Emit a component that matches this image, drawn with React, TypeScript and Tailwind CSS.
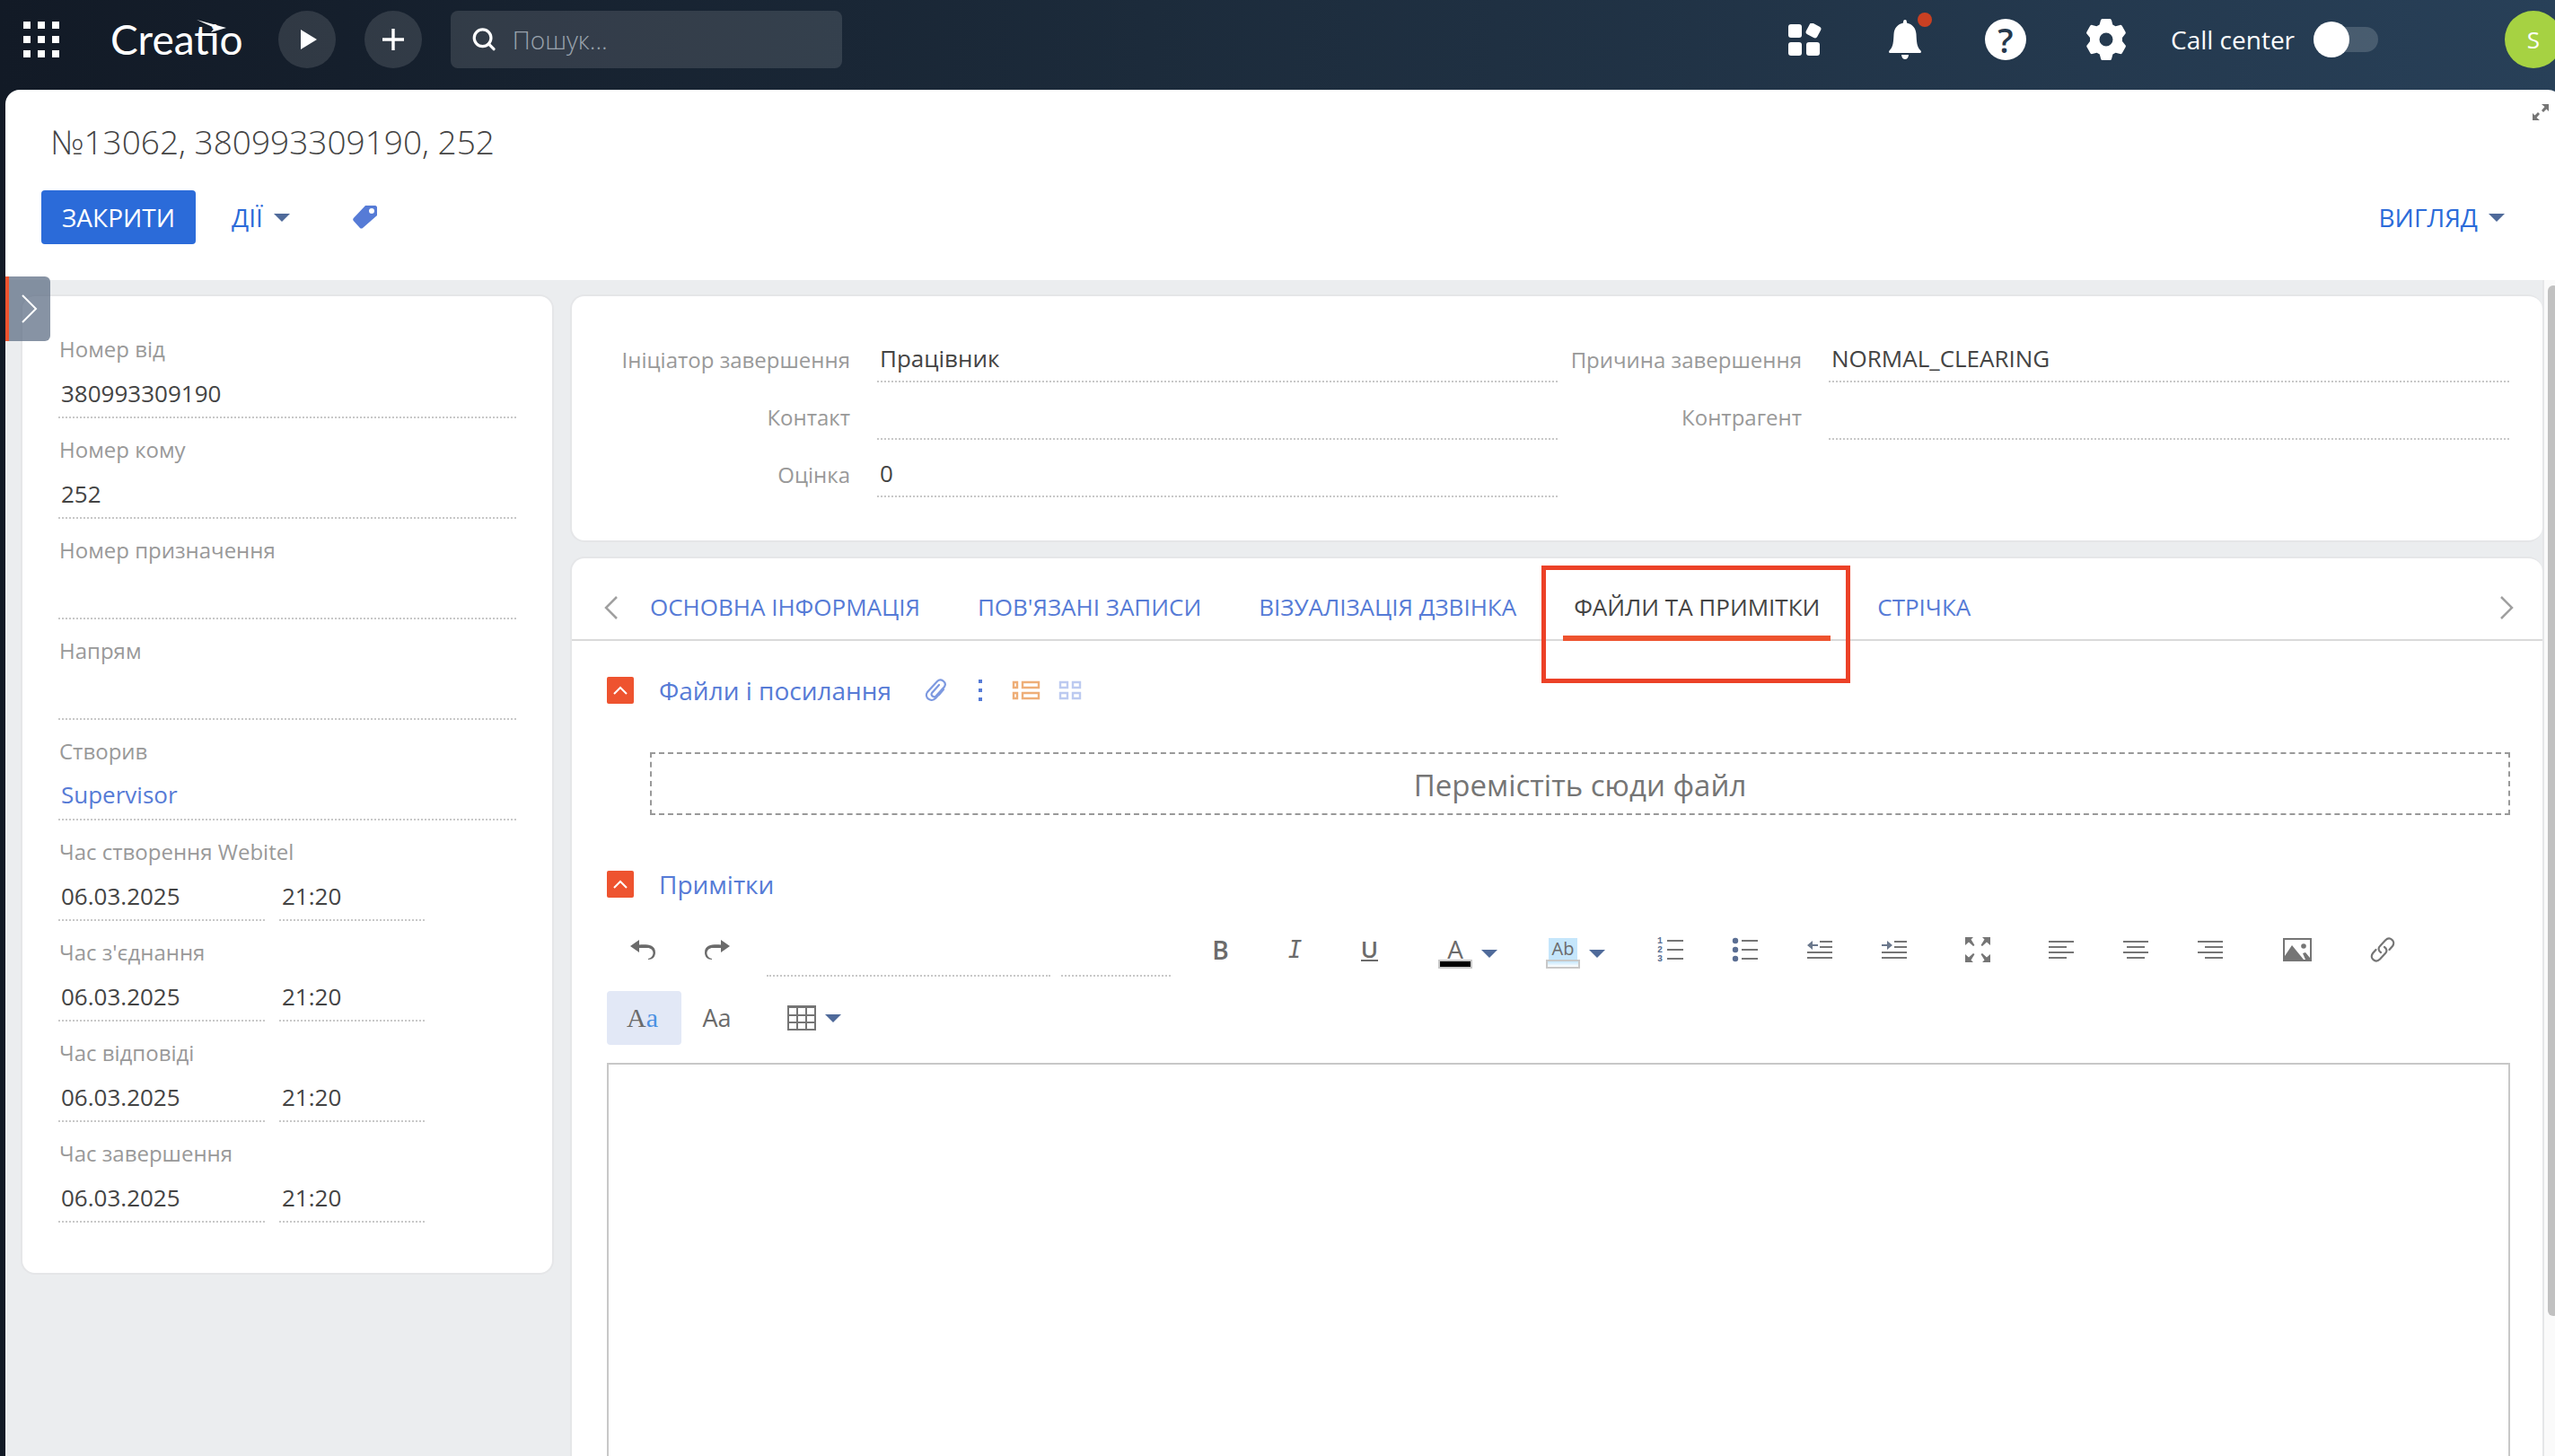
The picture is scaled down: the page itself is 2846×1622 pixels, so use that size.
import { useState } from 'react';
import type { ReactNode } from 'react';
import clsx from 'clsx';

const numberFields = [
  { id: 'caller', label: 'Номер від', value: '380993309190' },
  { id: 'callee', label: 'Номер кому', value: '252' },
  { id: 'destination', label: 'Номер призначення', value: '' },
  { id: 'direction', label: 'Напрям', value: '' },
];

const timeFields = [
  { id: 'created', label: 'Час створення Webitel', date: '06.03.2025', time: '21:20' },
  { id: 'connected', label: "Час з'єднання", date: '06.03.2025', time: '21:20' },
  { id: 'answered', label: 'Час відповіді', date: '06.03.2025', time: '21:20' },
  { id: 'finished', label: 'Час завершення', date: '06.03.2025', time: '21:20' },
];

const tabs = ['ОСНОВНА ІНФОРМАЦІЯ', "ПОВ'ЯЗАНІ ЗАПИСИ", 'ВІЗУАЛІЗАЦІЯ ДЗВІНКА', 'ФАЙЛИ ТА ПРИМІТКИ', 'СТРІЧКА'];
const highlightedTab = 'ФАЙЛИ ТА ПРИМІТКИ';

const inputClass =
  'block border-b-2 border-dotted border-[#c8c8c8] bg-transparent pl-[3px] text-[26px] text-[#444] focus:outline-none';

function Caret() {
  return (
    <svg width="18" height="9" viewBox="0 0 18 9" fill="#4f6a9a">
      <path d="M0 0h18L9 9z" />
    </svg>
  );
}

function SideField({ id, label, children }: { id: string; label: string; children: ReactNode }) {
  return (
    <div className="flex h-28 flex-col justify-end">
      <label htmlFor={id} className="pl-px text-[24px] leading-9 text-[#999]">
        {label}
      </label>
      {children}
    </div>
  );
}

function RowField({ id, label, value }: { id: string; label: string; value: string }) {
  return (
    <div className="flex h-16 items-end">
      <label htmlFor={id} className="w-[302px] shrink-0 pr-[30px] text-right text-[24px] leading-[50px] text-[#999]">
        {label}
      </label>
      <input id={id} defaultValue={value} className={clsx(inputClass, 'h-[52px] min-w-0 flex-1')} />
    </div>
  );
}

function Tool({ label, active, children }: { label: string; active?: boolean; children: ReactNode }) {
  return (
    <button
      type="button"
      aria-label={label}
      className={clsx('flex h-[60px] w-[83px] items-center justify-center rounded pr-1 text-[#6b6b6b]', active && 'bg-[#e2e8f6]')}
    >
      {children}
    </button>
  );
}

function SectionHeader({ title, open, onToggle, children }: { title: string; open: boolean; onToggle: () => void; children?: ReactNode }) {
  return (
    <div className="flex h-10 items-center">
      <button type="button" aria-label={title} onClick={onToggle} className="flex size-[30px] items-center justify-center rounded-xs bg-[#ee532f]">
        <svg width="16" height="10" viewBox="0 0 16 10" fill="none" stroke="#fff" strokeWidth="2" className={open ? '' : 'rotate-180'}>
          <path d="M1 9l7-7 7 7" />
        </svg>
      </button>
      <h2 className="ml-7 text-[28px] leading-10 text-[#567bd6]">{title}</h2>
      {children}
    </div>
  );
}

function TopBar() {
  return (
    <header className="flex h-[100px] shrink-0 items-center pt-3 pb-6 pl-[26px]">
      <button type="button" aria-label="Apps">
        <svg width="40" height="40" viewBox="0 0 40 40" fill="#fff">
          <path d="M0 0h8v8H0zM16 0h8v8h-8zM32 0h8v8h-8zM0 16h8v8H0zM16 16h8v8h-8zM32 16h8v8h-8zM0 32h8v8H0zM16 32h8v8h-8zM32 32h8v8h-8z" />
        </svg>
      </button>
      <a href="#" className="relative ml-[57px] w-[150px] font-[Lato] text-[46px] leading-[68px] text-white">
        Creatio
        <svg width="34" height="15" viewBox="0 0 34 15" fill="#fff" className="absolute top-3 left-24">
          <path d="M0 0l33 9-17 5 4-5z" />
        </svg>
      </a>
      <button type="button" aria-label="Run" className="ml-[37px] flex size-16 items-center justify-center rounded-full bg-white/12">
        <svg width="18" height="22" viewBox="0 0 18 22" fill="#fff" className="ml-1">
          <path d="M0 0l18 11L0 22z" />
        </svg>
      </button>
      <button type="button" aria-label="Add" className="ml-8 flex size-16 items-center justify-center rounded-full bg-white/12">
        <svg width="24" height="24" viewBox="0 0 24 24" stroke="#fff" strokeWidth="3.4">
          <path d="M12 0v24M0 12h24" />
        </svg>
      </button>
      <label className="ml-8 flex h-16 w-[436px] items-center gap-[18px] rounded-lg bg-white/12 pl-6">
        <svg width="30" height="30" viewBox="0 0 30 30" fill="none" stroke="#fff" strokeWidth="3.6">
          <circle cx="13" cy="13" r="10.5" />
          <path d="M20.500 20.500L27 27" strokeLinecap="round" />
        </svg>
        <input
          aria-label="Пошук"
          placeholder="Пошук..."
          className="w-full bg-transparent text-[28px] font-light text-white placeholder:text-[#9aa3ad] focus:outline-none"
        />
      </label>

      <div className="ml-auto flex items-center">
        <div className="flex items-center gap-16">
          <button type="button" aria-label="Dashboards" className="flex size-12 items-center justify-center">
            <svg width="38" height="36" viewBox="0 0 38 36" fill="#fff">
              <rect x="1" y="1" width="15" height="15" rx="3" />
              <rect x="22" y="1" width="14" height="14" rx="3" transform="rotate(28 29 8)" />
              <rect x="1" y="21" width="15" height="15" rx="3" />
              <rect x="21" y="21" width="15" height="15" rx="3" />
            </svg>
          </button>
          <button type="button" aria-label="Notifications" className="relative flex size-12 items-center justify-center">
            <svg width="38" height="46" viewBox="0 0 38 46" fill="#fff">
              <path d="M19 1c1.500 0 2 1 2 3.500C27 6 31 10 31.500 17c.5 9 .5 14 5 18.500.8 1 .5 2.500-.8 2.500H2.300C1 38 .7 36.500 1.500 35.500 6 31 6 26 6.500 17 7 10 11 6 17 4.500 17 2 17.500 1 19 1z" />
              <path d="M15 40h8c0 3-2 5-4 5s-4-2-4-5z" />
            </svg>
            <span className="absolute -top-1.5 -right-1.5 size-4 rounded-full bg-[#c94022]" />
          </button>
          <button type="button" aria-label="Help" className="flex size-12 items-center justify-center">
            <span className="flex size-[46px] items-center justify-center rounded-full bg-white text-[38px] leading-none font-semibold text-[#26384c]">?</span>
          </button>
          <button type="button" aria-label="Settings" className="flex size-12 items-center justify-center">
            <svg width="48" height="48" viewBox="0 0 48 48" fill="#fff">
              <path
                fillRule="evenodd"
                d="M20 1h8c1 0 1.700.6 2 1.600l1.300 4.800 3.200 1.800 4.800-1.300c1-.3 1.900 0 2.400.9l3.800 6.600c.5.9.4 1.900-.4 2.600L42 22v4l3.200 4c.8.7.9 1.700.4 2.600l-3.800 6.600c-.5.9-1.400 1.200-2.400.9l-4.800-1.300-3.200 1.800-1.300 4.800c-.3 1-1 1.600-2 1.600h-8c-1 0-1.700-.6-2-1.600l-1.300-4.800-3.200-1.800-4.800 1.300c-1 .3-1.900 0-2.400-.9l-3.800-6.600c-.5-.9-.4-1.900.4-2.600L6 26v-4l-3.200-4c-.8-.7-.9-1.700-.4-2.600l3.800-6.600c.5-.9 1.400-1.200 2.400-.9l4.800 1.300 3.200-1.800L18 2.600c.3-1 1-1.600 2-1.600zM24 16.500a7.500 7.500 0 100 15 7.500 7.500 0 000-15z"
              />
            </svg>
          </button>
        </div>
        <label htmlFor="call-center" className="ml-12 w-[159px] text-[28px] leading-9 text-white">
          Call center
        </label>
        <span className="relative flex h-10 w-[72px] items-center">
          <input id="call-center" type="checkbox" className="peer h-7 w-full appearance-none rounded-full bg-white/16" />
          <span className="pointer-events-none absolute left-0 size-10 rounded-full bg-white" />
        </span>
        <button type="button" className="ml-[141px] size-16 rounded-full bg-[#a6d242] text-[26px] text-white">
          S
        </button>
      </div>
    </header>
  );
}

function SidePanel() {
  return (
    <aside className="w-[594px] shrink-0 self-start rounded-2xl border-2 border-[#e5e6e8] bg-white px-10 pt-6 pb-14">
      {numberFields.map((f) => (
        <SideField key={f.id} id={f.id} label={f.label}>
          <input id={f.id} defaultValue={f.value} className={clsx(inputClass, 'mt-1 h-[55px] w-full')} />
        </SideField>
      ))}
      <SideField id="author" label="Створив">
        <div className="mt-1 flex h-[55px] items-center border-b-2 border-dotted border-[#c8c8c8] pl-[3px]">
          <a id="author" href="#" className="text-[26px] text-[#567bd6]">
            Supervisor
          </a>
        </div>
      </SideField>
      {timeFields.map((f) => (
        <SideField key={f.id} id={f.id} label={f.label}>
          <div className="mt-1 flex gap-4">
            <input id={f.id} defaultValue={f.date} className={clsx(inputClass, 'h-[55px] w-[230px]')} />
            <input aria-label={f.label} defaultValue={f.time} className={clsx(inputClass, 'h-[55px] w-[162px]')} />
          </div>
        </SideField>
      ))}
    </aside>
  );
}

function EditorToolbar() {
  return (
    <div className="mt-[23px]">
      <div className="flex gap-3">
        <div className="flex">
          <Tool label="Undo">
            <svg width="28" height="22" viewBox="0 0 28 22" fill="currentColor">
              <path d="M0 7l10-7v5.500C18 5 28 5 28 14c0 5-3 8-8 8v-1c8-2 7-12-1-12h-9v5z" />
            </svg>
          </Tool>
          <Tool label="Redo">
            <svg width="28" height="22" viewBox="0 0 28 22" fill="currentColor">
              <path d="M28 7L18 0v5.500C10 5 0 5 0 14c0 5 3 8 8 8v-1C0 19 1 9 9 9h9v5z" />
            </svg>
          </Tool>
        </div>
        <input aria-label="Font" className="h-[60px] w-[316px] border-b-2 border-dotted border-[#c8c8c8]" />
        <input aria-label="Font size" className="h-[60px] w-[122px] border-b-2 border-dotted border-[#c8c8c8]" />
        <div className="flex pl-1 text-[28px]">
          <Tool label="Bold">
            <span className="font-semibold">B</span>
          </Tool>
          <Tool label="Italic">
            <span className="font-['DejaVu_Sans_Mono'] text-[26px] italic">I</span>
          </Tool>
          <Tool label="Underline">
            <span className="border-b-2 border-[#6b6b6b] text-[26px] leading-[24px] font-semibold">U</span>
          </Tool>
        </div>
        <button type="button" aria-label="Text color" className="flex h-[60px] w-[108px] items-center justify-center gap-2.5 pt-2">
          <span className="flex flex-col items-center">
            <span className="text-[28px] leading-6 text-[#6b6b6b]">A</span>
            <span className="h-2.5 w-[38px] border-2 border-[#c8c8c8] bg-black" />
          </span>
          <Caret />
        </button>
        <button type="button" aria-label="Highlight color" className="flex h-[60px] w-[108px] items-center justify-center gap-2.5 pt-2">
          <span className="flex flex-col items-center">
            <span className="w-8 bg-[#c5e6fb] text-center text-[20px] leading-6 text-[#6b6b6b]">Ab</span>
            <span className="h-2.5 w-[38px] border-2 border-[#c8c8c8] bg-linear-to-b from-[#c5e6fb] to-white" />
          </span>
          <Caret />
        </button>
        <div className="flex gap-2.5">
          <div className="flex">
            <Tool label="Numbered list">
              <svg width="30" height="32" viewBox="0 0 30 32" fill="#5b6f93" className="font-['Liberation_Mono'] text-[10px] font-bold">
                <text x="0" y="9">1</text>
                <text x="0" y="19">2</text>
                <text x="0" y="29">3</text>
                <path d="M11 5h18v2H11zM11 15h18v2H11zM11 25h18v2H11z" fill="#757575" />
              </svg>
            </Tool>
            <Tool label="Bulleted list">
              <svg width="30" height="28" viewBox="0 0 30 28" fill="#757575">
                <g fill="#5b6f93">
                  <circle cx="4" cy="4" r="3.200" />
                  <circle cx="4" cy="14" r="3.200" />
                  <circle cx="4" cy="24" r="3.200" />
                </g>
                <path d="M11 3h18v2H11zM11 13h18v2H11zM11 23h18v2H11z" />
              </svg>
            </Tool>
            <Tool label="Decrease indent">
              <svg width="28" height="20" viewBox="0 0 28 20" fill="#757575">
                <path d="M14 0h14v2H14zM14 6h14v2H14zM0 12h28v2H0zM0 18h28v2H0z" />
                <path d="M0 5l6-5v4h6v2H6v4z" fill="#6b788c" />
              </svg>
            </Tool>
            <Tool label="Increase indent">
              <svg width="28" height="20" viewBox="0 0 28 20" fill="#757575">
                <path d="M14 0h14v2H14zM14 6h14v2H14zM0 12h28v2H0zM0 18h28v2H0z" />
                <path d="M12 5L6 0v4H0v2h6v4z" fill="#6b788c" />
              </svg>
            </Tool>
          </div>
          <Tool label="Full screen">
            <svg width="28" height="28" viewBox="0 0 28 28" fill="#757575">
              <path d="M0 0h9L6.500 2.500l4 6.500-1.500 1-5-4.500L0 9zM28 0h-9l2.500 2.500-4 6.500 1.500 1 5-4.500L28 9zM0 28h9l-2.500-2.500 4-6.500L9 18l-5 4.500L0 19zM28 28h-9l2.500-2.500-4-6.500 1.500-1 5 4.500 4-3.500z" />
            </svg>
          </Tool>
          <div className="flex">
            <Tool label="Align left">
              <svg width="28" height="20" viewBox="0 0 28 20" fill="#757575">
                <path d="M0 0h28v2H0zM0 6h20v2H0zM0 12h28v2H0zM0 18h20v2H0z" />
              </svg>
            </Tool>
            <Tool label="Align center">
              <svg width="28" height="20" viewBox="0 0 28 20" fill="#757575">
                <path d="M0 0h28v2H0zM4 6h20v2H4zM0 12h28v2H0zM4 18h20v2H4z" />
              </svg>
            </Tool>
            <Tool label="Align right">
              <svg width="28" height="20" viewBox="0 0 28 20" fill="#757575">
                <path d="M0 0h28v2H0zM8 6h20v2H8zM0 12h28v2H0zM8 18h20v2H8z" />
              </svg>
            </Tool>
          </div>
          <div className="flex gap-3 pl-1">
            <Tool label="Image">
              <svg width="32" height="26" viewBox="0 0 32 26" fill="#757575">
                <path fillRule="evenodd" d="M0 0h32v26H0zM2 2v18L10 8l13 16h2l-3-7 3-1 5 6V2z" />
                <circle cx="23" cy="9" r="2.800" />
              </svg>
            </Tool>
            <Tool label="Link">
              <svg width="28" height="28" viewBox="0 0 28 28" fill="none" stroke="#757575" strokeWidth="2.200" strokeLinecap="round">
                <path d="M12 17c-3-2-3-5-1-7l6-6.500c5-5 12 1 8 6.500l-3.500 4" />
                <path d="M16 11c3 2 3 5 1 7l-6 6.500c-5 5-12-1-8-6.500L6.500 14" />
              </svg>
            </Tool>
          </div>
        </div>
      </div>
      <div className="mt-4 flex">
        <Tool label="Formatted text" active>
          <span className="font-['Liberation_Serif',serif] text-[30px] leading-8">
            A<span className="text-[#4a90e2]">a</span>
          </span>
        </Tool>
        <Tool label="Plain text">
          <span className="text-[27px] leading-8">Aa</span>
        </Tool>
        <button type="button" aria-label="Table" className="ml-2.5 flex h-[60px] w-[110px] items-center justify-center gap-2.5">
          <svg width="32" height="28" viewBox="0 0 32 28" fill="none" stroke="#757575" strokeWidth="2">
            <path d="M1 2h30v25H1zM11 2v25M21 2v25M1 11h30M1 19h30" />
            <path d="M0 1.500h32" strokeWidth="3" />
          </svg>
          <Caret />
        </button>
      </div>
    </div>
  );
}

export default function App() {
  const [activeTab, setActiveTab] = useState(highlightedTab);
  const [filesOpen, setFilesOpen] = useState(true);
  const [notesOpen, setNotesOpen] = useState(true);

  return (
    <div className="h-screen overflow-hidden bg-linear-to-r from-[#121a26] via-[#1c2b3b] via-45% to-[#284058] font-['Open_Sans','Noto_Sans',sans-serif]">
      <div className="-mr-2 flex h-full flex-col">
        <TopBar />
        <main className="relative ml-1.5 flex min-h-0 flex-1 flex-col rounded-t-2xl bg-white">
          <div className="pt-4 pr-[15px] pb-10 pl-10">
            <div className="flex items-start justify-between">
              <h1 className="pt-4 pl-2.5 text-[37px] leading-[52px] font-light text-[#444]">№13062, 380993309190, 252</h1>
              <button type="button" aria-label="Expand">
                <svg width="18" height="18" viewBox="0 0 18 18" fill="#757575">
                  <path d="M10 0h8v8l-2.500-2.500L12 9l-2-2 3.500-4zM8 18H0v-8l2.500 2.500L6 9l2 2-3.500 4z" />
                </svg>
              </button>
            </div>
            <div className="mt-7 flex items-center pr-[49px] text-[28px]">
              <button type="button" className="h-[60px] w-[172px] rounded bg-[#2b6bd9] text-white">
                ЗАКРИТИ
              </button>
              <button type="button" className="ml-10 flex items-center gap-3 text-[#2b6bd9]">
                ДІЇ
                <Caret />
              </button>
              <button type="button" aria-label="Tags" className="ml-[70px]">
                <svg width="28" height="26" viewBox="0 0 28 26" fill="#567bd6">
                  <path fillRule="evenodd" d="M14 0h11c1 0 2 1 2 2v9L11 25c-1 .8-2 .8-3 0L.8 17c-.8-1-.8-2 0-3zM21 3a3 3 0 100 6 3 3 0 000-6z" />
                </svg>
              </button>
              <button type="button" className="ml-auto flex items-center gap-3 text-[#2b6bd9]">
                ВИГЛЯД
                <Caret />
              </button>
            </div>
          </div>

          <div className="flex min-h-0 flex-1 overflow-hidden bg-[#ebedef]">
            <div className="flex min-w-0 flex-1 gap-[18px] pt-4 pl-[17px]">
              <SidePanel />
              <div className="flex min-w-0 flex-1 flex-col gap-4">
                <section className="grid grid-cols-2 rounded-2xl border-2 border-r-0 border-[#e5e6e8] bg-white pt-8 pr-[37px] pb-12 pl-[38px]">
                  <RowField id="initiator" label="Ініціатор завершення" value="Працівник" />
                  <RowField id="reason" label="Причина завершення" value="NORMAL_CLEARING" />
                  <RowField id="contact" label="Контакт" value="" />
                  <RowField id="account" label="Контрагент" value="" />
                  <RowField id="rating" label="Оцінка" value="0" />
                </section>

                <section className="rounded-t-2xl border-2 border-r-0 border-b-0 border-[#e5e6e8] bg-white">
                  <nav className="flex h-[92px] items-center border-b-2 border-[#dadada] pt-5 pr-8 pl-9">
                    <button type="button" aria-label="Previous tabs" className="mr-6">
                      <svg width="15" height="26" viewBox="0 0 15 26" fill="none" stroke="#a0a0a0" strokeWidth="2.500">
                        <path d="M14 1L2 13l12 12" />
                      </svg>
                    </button>
                    <div className="-mb-0.5 flex gap-10 self-stretch text-[26px]">
                      {tabs.map((tab) => (
                        <button
                          key={tab}
                          type="button"
                          onClick={() => setActiveTab(tab)}
                          className={clsx(
                            'relative border-b-[6px] px-3 pt-0.5',
                            tab === activeTab ? 'border-[#ee532f] text-[#444]' : 'border-transparent text-[#567bd6]',
                          )}
                        >
                          {tab}
                          {tab === highlightedTab && (
                            <span className="pointer-events-none absolute -top-3 -right-[22px] -bottom-[53px] -left-6 border-[5px] border-[#ec4127]" />
                          )}
                        </button>
                      ))}
                    </div>
                    <button type="button" aria-label="Next tabs" className="ml-auto">
                      <svg width="15" height="26" viewBox="0 0 15 26" fill="none" stroke="#a0a0a0" strokeWidth="2.500">
                        <path d="M1 1l12 12L1 25" />
                      </svg>
                    </button>
                  </nav>

                  <div className="pt-[35px] pr-9 pl-[39px]">
                    <SectionHeader title="Файли і посилання" open={filesOpen} onToggle={() => setFilesOpen(!filesOpen)}>
                      <button type="button" aria-label="Attach file" className="ml-[37px]">
                        <svg width="26" height="26" viewBox="0 0 26 26" fill="none" stroke="#7d99e0" strokeWidth="2.200" strokeLinecap="round">
                          <path d="M21 12l-9 10c-5 5-13-1-9-7L14 3c4-4 11 1 8 6l-9 10c-2 3-7 0-5-3l8-9M16 18l5-6" />
                        </svg>
                      </button>
                      <button type="button" aria-label="More" className="ml-[34px]">
                        <svg width="4" height="24" viewBox="0 0 4 24" fill="#567bd6">
                          <path d="M0 0h4v4H0zM0 10h4v4H0zM0 20h4v4H0z" />
                        </svg>
                      </button>
                      <button type="button" aria-label="List view" className="ml-[33px]">
                        <svg width="32" height="22" viewBox="0 0 32 22" fill="none" stroke="#eeae78" strokeWidth="2.400">
                          <path d="M2 2h4v6H2zM12 2h18v6H12zM2 14h4v6H2zM12 14h18v6H12z" />
                        </svg>
                      </button>
                      <button type="button" aria-label="Tile view" className="ml-5">
                        <svg width="26" height="22" viewBox="0 0 26 22" fill="none" stroke="#bccaf0" strokeWidth="2.400">
                          <path d="M2 2h8v6H2zM16 2h8v6h-8zM2 14h8v6H2zM16 14h8v6h-8z" />
                        </svg>
                      </button>
                    </SectionHeader>
                    {filesOpen && (
                      <div className="mt-[49px] ml-12 flex h-[70px] items-center justify-center border-2 border-dashed border-[#999] pt-1 text-[33px] text-[#757575]">
                        Перемістіть сюди файл
                      </div>
                    )}

                    <div className="mt-[57px]">
                      <SectionHeader title="Примітки" open={notesOpen} onToggle={() => setNotesOpen(!notesOpen)} />
                      {notesOpen && (
                        <>
                          <EditorToolbar />
                          <textarea aria-label="Примітки" className="mt-5 block h-[600px] w-full resize-none border-2 border-[#c8c8c8] p-5 text-[26px] focus:outline-none" />
                        </>
                      )}
                    </div>
                  </div>
                </section>
              </div>
            </div>
            {/* scroll track */}
            <div className="w-[22px] shrink-0 border-l-2 border-[#e5e6e8] bg-[#fafafa] pt-1.5 pl-1">
              <div className="h-[88%] w-3 rounded-full bg-[#c1c1c1]" />
            </div>
          </div>

          <button
            type="button"
            aria-label="Open panel"
            className="absolute top-[208px] left-0 flex h-[72px] w-[50px] items-center justify-center rounded-r-md border-l-4 border-[#ee532f] bg-[#5f6f86]/75"
          >
            <svg width="18" height="32" viewBox="0 0 18 32" fill="none" stroke="#fff" strokeWidth="2">
              <path d="M1 1l15 15L1 31" />
            </svg>
          </button>
        </main>
      </div>
    </div>
  );
}
